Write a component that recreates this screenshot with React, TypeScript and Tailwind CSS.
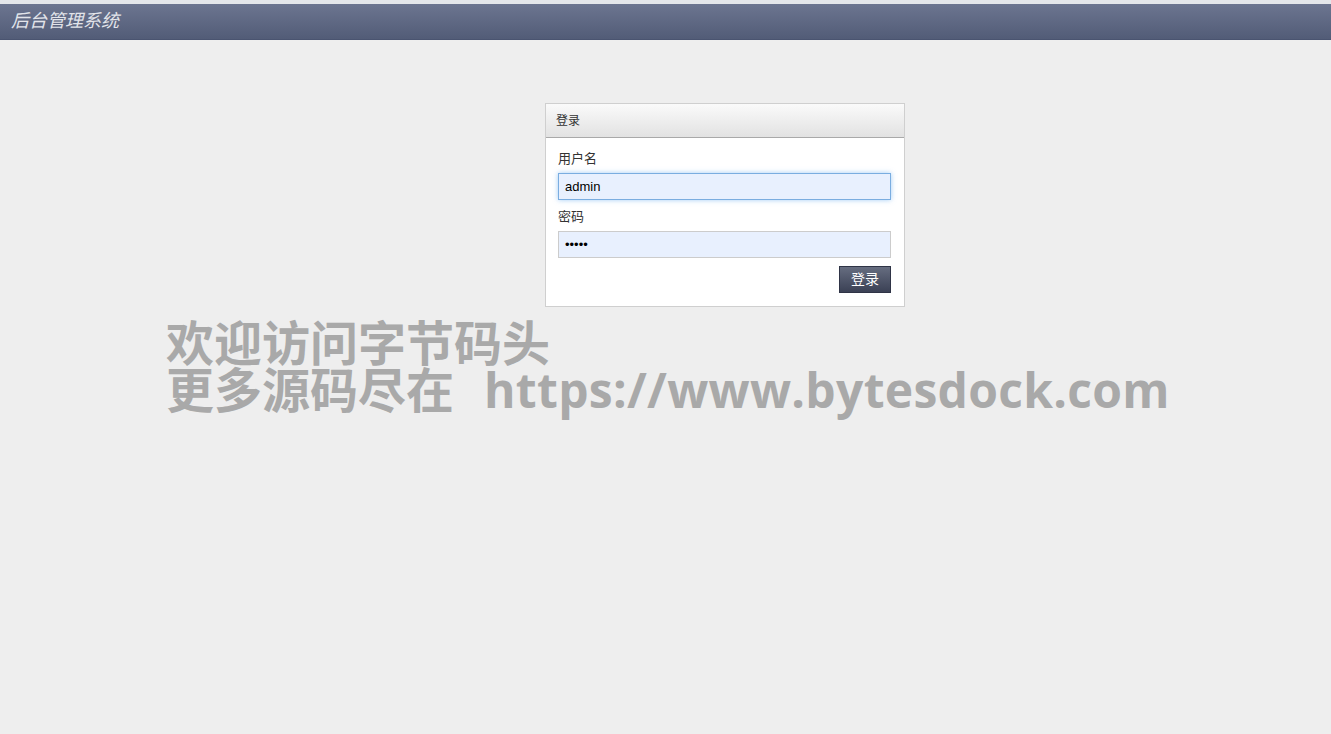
export default function App() {
  return (
    <div className="min-h-[734px] bg-[#eeeeee] font-['Liberation_Sans','Noto_Sans_CJK_SC',sans-serif]">
      <div className="h-[4px] bg-[#e4e6ea]" />
      <div className="h-[36px] flex items-center px-[11px] bg-gradient-to-b from-[#6c7590] to-[#525c77] border-b border-[#4a5470]">
        <span className="text-[18px] italic text-[#e2e4ea] font-['Liberation_Serif','Noto_Sans_CJK_SC',serif]">后台管理系统</span>
      </div>

      <div className="flex pl-[545px] pt-[63px]">
        <div className="w-[360px] bg-white border border-[#cfcfcf]">
          <div className="h-[34px] flex items-center px-[10px] bg-gradient-to-b from-[#fafafa] to-[#e2e2e2] border-b border-[#a9a9a9]">
            <span className="text-[12px] text-[#333]">登录</span>
          </div>
          <div className="pl-[12px] pr-[13px] pt-[12px] pb-[13px] flex flex-col">
            <label className="text-[13px] text-[#333] leading-[18px]">用户名</label>
            <input
              className="mt-[5px] h-[27px] w-full px-[6px] text-[13px] text-black bg-[#e8f0fe] border border-[#7aade0] shadow-[0_0_5px_rgba(100,170,240,0.6)] outline-none"
              defaultValue="admin"
            />
            <label className="mt-[8px] text-[13px] text-[#333] leading-[18px]">密码</label>
            <input
              type="password"
              className="mt-[5px] h-[27px] w-full px-[6px] text-[13px] text-black bg-[#e8f0fe] border border-[#cccccc] outline-none"
              defaultValue="admin"
            />
            <div className="flex justify-end mt-[8px]">
              <button className="h-[27px] w-[52px] text-[14px] text-white bg-gradient-to-b from-[#666d80] to-[#3b4155] border border-[#2f3446]">
                登录
              </button>
            </div>
          </div>
        </div>
      </div>

      <div className="pl-[166px] mt-[12px] text-[48px] leading-[47px] font-bold text-[#a9a9a9] font-['Open_Sans','Noto_Sans_CJK_SC',sans-serif]">
        <div>欢迎访问字节码头</div>
        <div>
          更多源码尽在<span className="ml-[30px] tracking-[0.3px]">https://www.bytesdock.com</span>
        </div>
      </div>
    </div>
  );
}
